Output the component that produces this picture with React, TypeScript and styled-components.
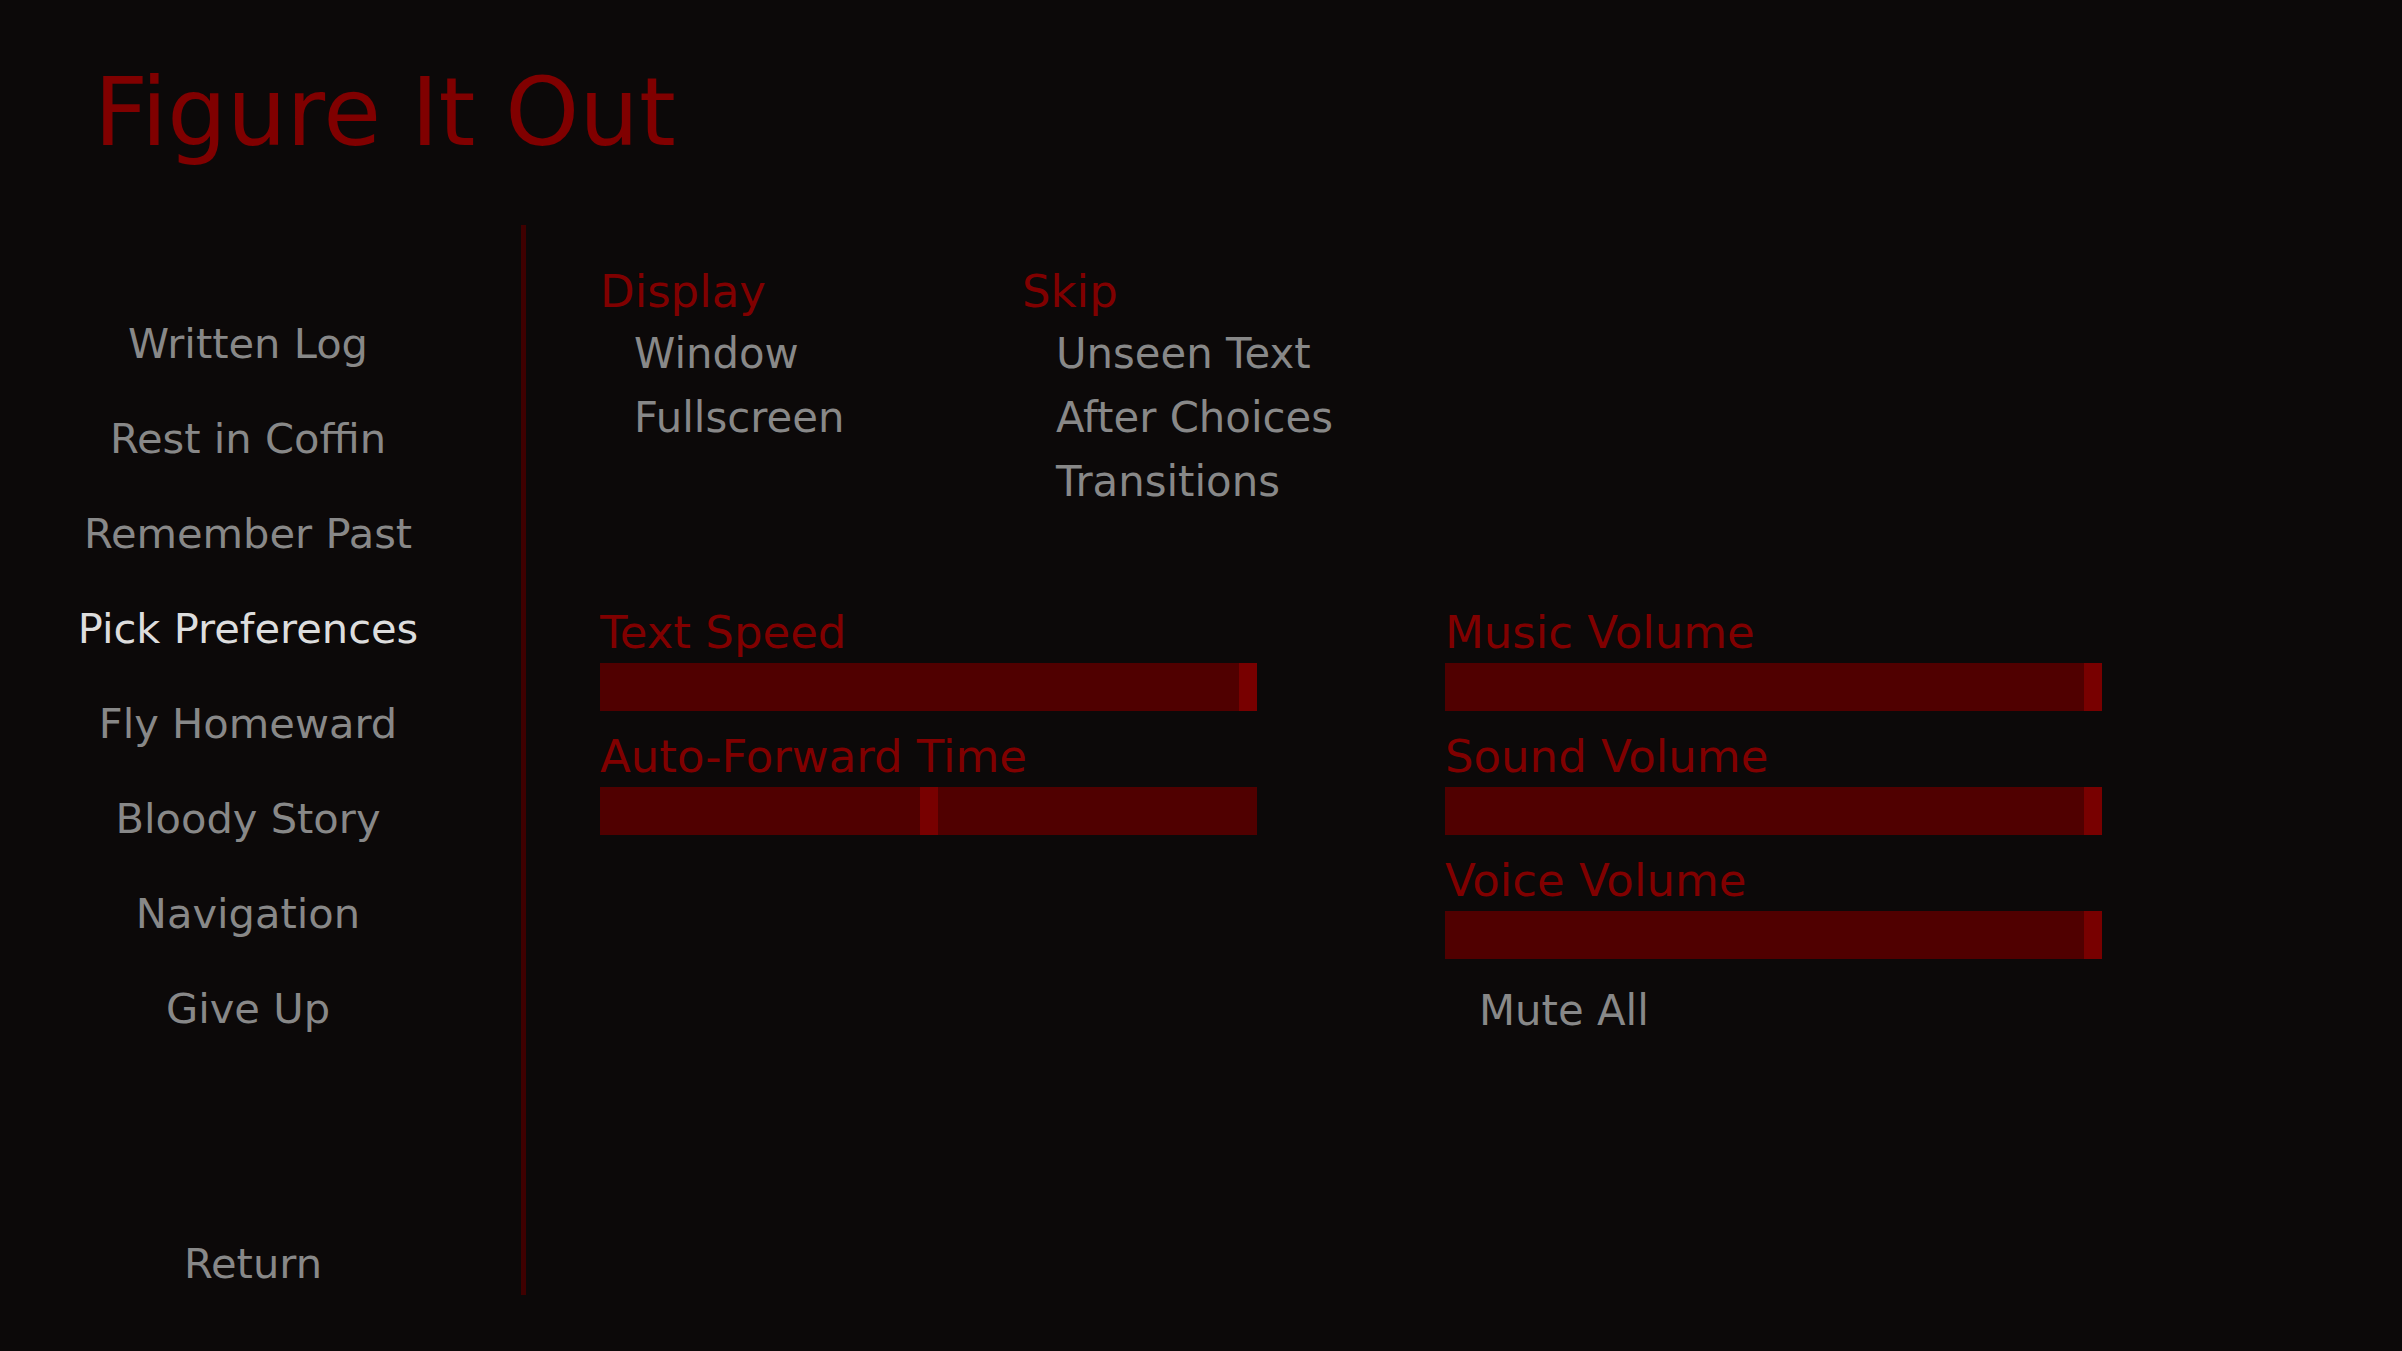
import React from 'react'
import styled, {createGlobalStyle} from 'styled-components'

const GlobalStyle = createGlobalStyle`
  html, body {
    margin: 0;
    padding: 0;
    background: #0c0909;
  }

  body {
    font-family: "DejaVu Sans", "Liberation Sans", sans-serif;
  }
`

const RED = '#800000'
const GREY = '#888888'

const Screen = styled.div`
  width: 2402px;
  height: 1351px;
  display: flex;
  flex-direction: column;
  background: #0c0909;
  overflow: hidden;
`

const Title = styled.h1`
  margin: 0;
  padding: 58px 0 0 94px;
  height: 110px;
  font-size: 94px;
  line-height: 110px;
  font-weight: normal;
  color: ${RED};
`

const Body = styled.div`
  display: flex;
  margin-top: 57px;
  height: 1070px;
`

const Nav = styled.nav`
  width: 496px;
  margin-right: 25px;
  padding: 95px 0 7px;
  box-sizing: border-box;
  display: flex;
  flex-direction: column;
  align-items: center;
  gap: 47px;
`

const NavButton = styled.div<{ selected?: boolean }>`
  font-size: 41.6px;
  line-height: 48px;
  white-space: nowrap;
  color: ${p => p.selected ? '#dddddd' : GREY};
  cursor: pointer;
`

const ReturnButton = styled(NavButton)`
  margin-top: auto;
  padding-left: 10px;
`

const Divider = styled.div`
  width: 5px;
  background: #3f0000;
`

const Content = styled.div`
  flex: 1;
  padding: 41px 0 0 74px;
`

const PrefRow = styled.div`
  display: flex;
`

const PrefGroup = styled.div`
  width: 422px;
  display: flex;
  flex-direction: column;
`

const Label = styled.div`
  font-size: 45px;
  line-height: 52px;
  color: ${RED};
  white-space: nowrap;
`

const GroupLabel = styled(Label)`
  margin-bottom: 4px;
`

const Option = styled.div`
  padding-left: 34px;
  font-size: 41.8px;
  line-height: 64px;
  color: ${GREY};
  white-space: nowrap;
  cursor: pointer;
`

const MuteOption = styled(Option)`
  margin-top: 0;
`

const SliderGrid = styled.div`
  margin-top: 93px;
  display: grid;
  grid-template-columns: 657px 657px;
  column-gap: 188px;
  align-items: start;
`

const SliderColumn = styled.div`
  display: flex;
  flex-direction: column;
  gap: 20px;
`

const SliderBlock = styled.div`
  display: flex;
  flex-direction: column;
  gap: 4px;
`

const Bar = styled.div`
  position: relative;
  height: 48px;
  background: #500000;
`

const Thumb = styled.div`
  position: absolute;
  top: 0;
  bottom: 0;
  width: 18px;
  background: #780000;
`

const Slider = ({label, value}: { label: string, value: number }) => (
  <SliderBlock>
    <Label>{label}</Label>
    <Bar>
      <Thumb style={{left: `calc(${value} * (100% - 18px))`}}/>
    </Bar>
  </SliderBlock>
)

const navItems = [
  'Written Log',
  'Rest in Coffin',
  'Remember Past',
  'Pick Preferences',
  'Fly Homeward',
  'Bloody Story',
  'Navigation',
  'Give Up',
]

export default function App() {
  return (
    <Screen>
      <GlobalStyle/>
      <Title>Figure It Out</Title>
      <Body>
        <Nav>
          {navItems.map(item => (
            <NavButton key={item} selected={item === 'Pick Preferences'}>{item}</NavButton>
          ))}
          <ReturnButton>Return</ReturnButton>
        </Nav>
        <Divider/>
        <Content>
          <PrefRow>
            <PrefGroup>
              <GroupLabel>Display</GroupLabel>
              <Option>Window</Option>
              <Option>Fullscreen</Option>
            </PrefGroup>
            <PrefGroup>
              <GroupLabel>Skip</GroupLabel>
              <Option>Unseen Text</Option>
              <Option>After Choices</Option>
              <Option>Transitions</Option>
            </PrefGroup>
          </PrefRow>
          <SliderGrid>
            <SliderColumn>
              <Slider label="Text Speed" value={1}/>
              <Slider label="Auto-Forward Time" value={0.5}/>
            </SliderColumn>
            <SliderColumn>
              <Slider label="Music Volume" value={1}/>
              <Slider label="Sound Volume" value={1}/>
              <Slider label="Voice Volume" value={1}/>
              <MuteOption>Mute All</MuteOption>
            </SliderColumn>
          </SliderGrid>
        </Content>
      </Body>
    </Screen>
  )
}
